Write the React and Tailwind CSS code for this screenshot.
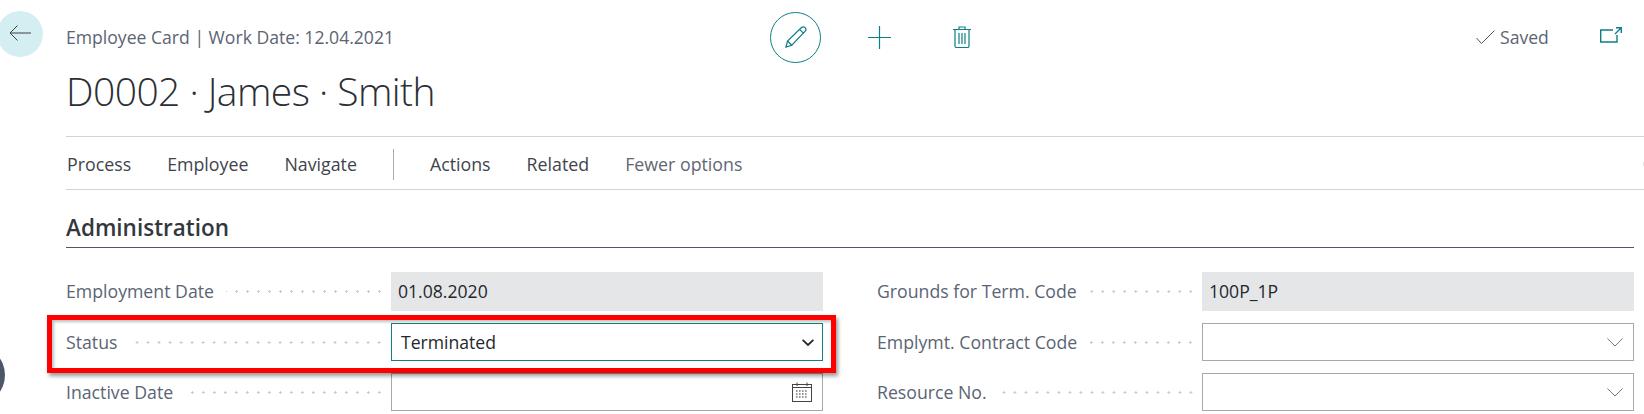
const font = "font-['Open_Sans',sans-serif]"

const DotLeader = () => (
  <div className="flex-1 ml-3 mr-[6px] h-[3px] bg-right bg-[radial-gradient(circle,#c9cacc_1.2px,transparent_1.4px)] bg-[length:11px_3px]" />
)

const Field = ({ label, value, kind, focused, icon }) => (
  <div className={`flex items-center ${kind === "ro" ? "h-[39px]" : "h-[38px]"}`}>
    <span className="text-[#5b6473] text-[17.7px] whitespace-nowrap">{label}</span>
    <DotLeader />
    <div
      className={`w-[432px] shrink-0 h-full flex items-center justify-between text-[17.6px] text-[#23282e] ${
        kind === "ro"
          ? "bg-[#e5e6e8] pl-[7px]"
          : focused
          ? "border border-[#0e7f84] pl-[9px] pr-[8px]"
          : "border border-[#a8a8a8] pr-[10px]"
      }`}
    >
      <span>{value}</span>
      {icon}
    </div>
  </div>
)

const Calendar = () => (
  <svg width="20" height="20" viewBox="0 0 20 20" fill="none" stroke="#444">
    <rect x="0.5" y="2.5" width="19" height="17" />
    <path d="M0.5 5.5H19.5M5 0.5V4M15 0.5V4" />
    <path d="M4 9h12M4 12h12M4 15h12" stroke="#777" strokeWidth="1.6" strokeDasharray="1.6 1.4" />
  </svg>
)

const DarkChevron = () => (
  <svg width="12" height="7" viewBox="0 0 12 7" fill="none" stroke="#23282e" strokeWidth="1.8">
    <path d="M0.6 0.8L6 6L11.4 0.8" />
  </svg>
)

const ThinChevron = () => (
  <svg width="16" height="9" viewBox="0 0 16 9" fill="none" stroke="#777">
    <path d="M0.4 0.5L8 8L15.6 0.5" />
  </svg>
)

const App = () => {
  return (
    <div className={`relative w-[1644px] h-[414px] overflow-hidden bg-white ${font}`}>
      {/* back button and the page bubble cut off by the window edge */}
      <div className="absolute left-[-3px] top-[11px] w-[46px] h-[46px] rounded-full bg-[#d5eef1] flex items-center justify-center">
        <svg width="22" height="16" viewBox="0 0 22 16" fill="none" stroke="#3c4148" className="mb-[2px]">
          <path d="M22 8H1M8.5 0.5L1 8L8.5 15.5" />
        </svg>
      </div>
      <div className="absolute left-[-55px] top-[345px] w-[60px] h-[60px] rounded-full bg-[#4d5768]" />
      <div className="absolute left-[1643px] top-[162px] w-px h-[4px] bg-[#d5e4e6]" />

      <div className="pl-[66px] pt-[25px]">
        <div className="flex items-center h-[24px]">
          <span className="text-[#5b6473] text-[17.6px] w-[704px] whitespace-nowrap">Employee Card | Work Date: 12.04.2021</span>
          <div className="w-[51px] h-[51px] rounded-full border border-[#0e7f84] flex items-center justify-center">
            <svg width="24" height="24" viewBox="0 0 24 24" fill="none" stroke="#0e7f84" strokeWidth="1.2">
              <path d="M2 22l1.5-6L17.5 2.5a2.5 2.5 0 0 1 3.6 0.1 2.5 2.5 0 0 1 .1 3.5L7.8 20.2z" />
              <path d="M3.5 16l4.3 4.2M15.6 4.4l4 4" />
            </svg>
          </div>
          <svg width="23" height="23" viewBox="0 0 23 23" fill="none" stroke="#0e7f84" strokeWidth="1.2" className="ml-[47px]">
            <path d="M11.5 0V23M0 11.5H23" />
          </svg>
          <svg width="18" height="22" viewBox="0 0 18 22" fill="none" stroke="#0e7f84" className="ml-[62px]">
            <path d="M0 3.5H18M6 3.5V1h6v2.5M2 3.5V20a1.5 1.5 0 0 0 1.5 1.5h11A1.5 1.5 0 0 0 16 20V3.5" strokeWidth="1.2" />
            <path d="M6 7v11M9 7v11M12 7v11" strokeWidth="1.2" />
          </svg>
          <div className="ml-[505px] flex items-center w-[73px] shrink-0">
            <svg width="19" height="14" viewBox="0 0 19 14" fill="none" stroke="#555">
              <path d="M0.5 8l5 5.5L18.5 0.5" />
            </svg>
            <span className="text-[#5b6473] text-[17.6px] ml-[5px]">Saved</span>
          </div>
          <svg width="22" height="16" viewBox="0 0 22 16" fill="none" stroke="#0e7f84" strokeWidth="1.4" className="ml-[51px] mb-[4px]">
            <path d="M13 3H0.7V15H17V8M15 7l6-6M16 0.7h5.3V6" />
          </svg>
        </div>

        <h1 className="text-[39px] font-light tracking-[-0.55px] text-[#2b2f36] leading-[56px] mt-[14px] whitespace-nowrap">
          D0002 · James · Smith
        </h1>

        <div className="mt-[17px] pt-[2px] border-y border-[#d3d3d3] h-[54px] flex items-center text-[17.8px] text-[#3f444c]">
          <span className="ml-[1px]">Process</span>
          <span className="ml-[36px]">Employee</span>
          <span className="ml-[36px]">Navigate</span>
          <span className="ml-[36px] w-px h-[31px] bg-[#a9adb3]" />
          <span className="ml-[36px]">Actions</span>
          <span className="ml-[36px]">Related</span>
          <span className="ml-[36px] text-[#5f6775]">Fewer options</span>
        </div>

        <h2 className="mt-[24px] text-[22.5px] font-semibold text-[#33383f] leading-[28px] pb-[5px] border-b border-[#4d5768] mr-[10px]">
          Administration
        </h2>

        <div className="mt-[24px] grid grid-cols-[757px_757px] gap-x-[54px] w-[1568px]">
          <div className="flex flex-col gap-[12px]">
            <Field label="Employment Date" value="01.08.2020" kind="ro" />
            <Field label="Status" value="Terminated" focused icon={<DarkChevron />} />
            <Field label="Inactive Date" icon={<Calendar />} />
          </div>
          <div className="flex flex-col gap-[12px]">
            <Field label="Grounds for Term. Code" value="100P_1P" kind="ro" />
            <Field label="Emplymt. Contract Code" icon={<ThinChevron />} />
            <Field label="Resource No." icon={<ThinChevron />} />
          </div>
        </div>
      </div>

      {/* red annotation box drawn on top of the screenshot */}
      <div className="absolute left-[47px] top-[315px] w-[789px] h-[58px] border-[5px] border-[#ff0000] shadow-[2px_3px_4px_rgba(0,0,0,0.4),inset_2px_2px_3px_rgba(0,0,0,0.25)] pointer-events-none" />
    </div>
  )
}

export default App
